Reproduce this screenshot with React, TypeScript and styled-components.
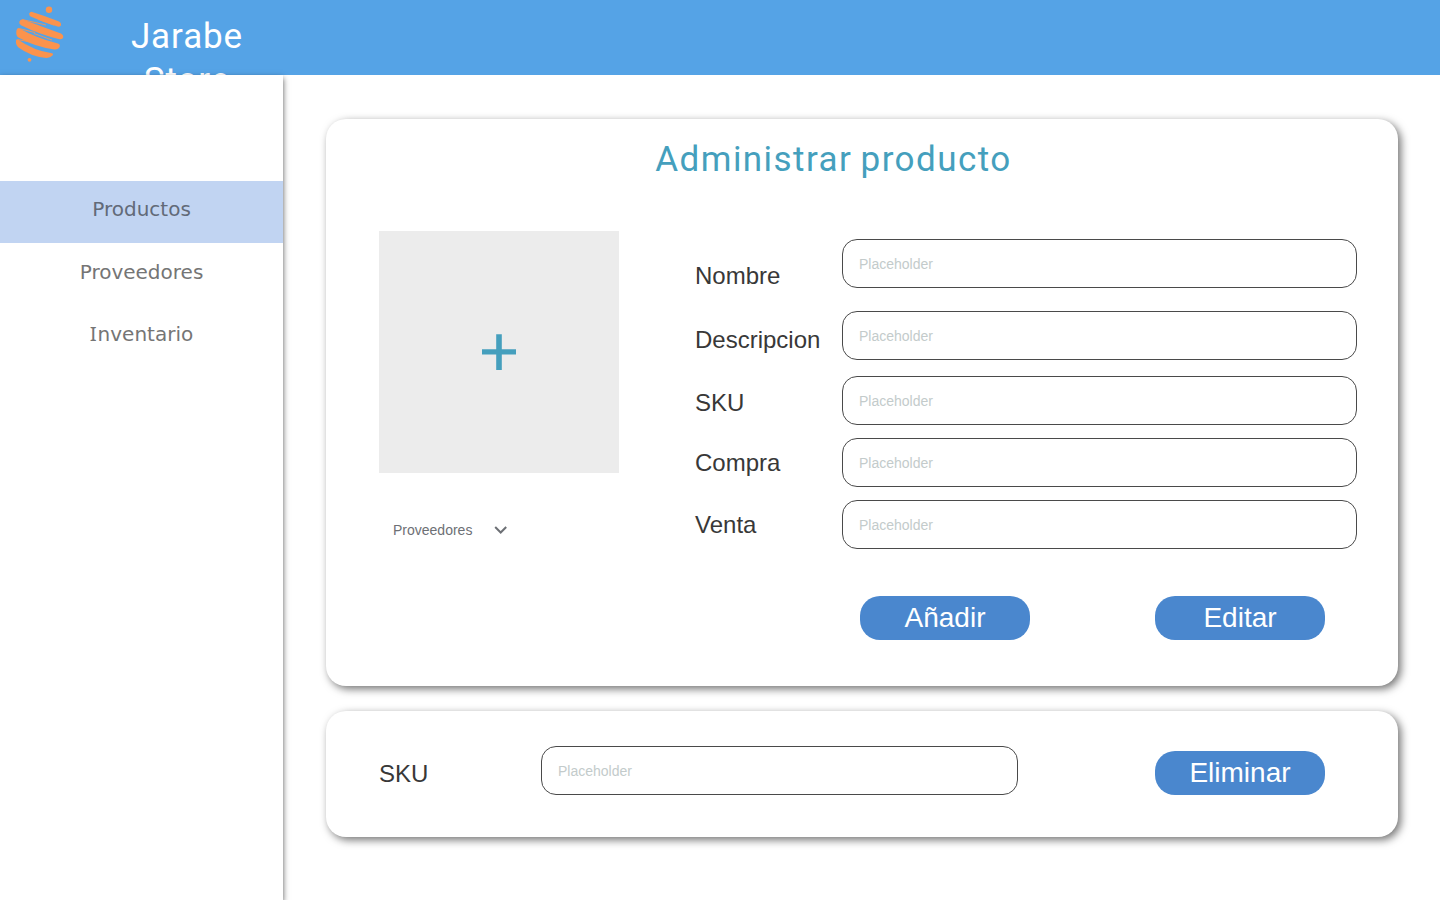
import React from "react";
import styled, { createGlobalStyle } from "styled-components";

const Global = createGlobalStyle`
  * { box-sizing: border-box; }
  body { margin: 0; background: #fff; font-family: "Liberation Sans", Arial, sans-serif; overflow: hidden; }
`;

const Page = styled.div`
  height: 900px;
  display: flex;
  flex-direction: column;
`;

const Header = styled.header`
  flex: none;
  height: 75px;
  display: flex;
  align-items: flex-start;
  background: #55a3e6;
`;

const Logo = styled.svg`
  flex: none;
  width: 90px;
  height: 75px;
`;

const Brand = styled.div`
  width: 160px;
  margin: 15px 0 0 17px;
  text-align: center;
  font: 400 35px/44px Roboto, sans-serif;
  letter-spacing: 0.9px;
  color: #fff;
`;

const Body = styled.div`
  flex: 1;
  display: flex;
  min-height: 0;
`;

const Sidebar = styled.nav`
  position: relative;
  width: 283px;
  padding-top: 106px;
  background: #fff;
  box-shadow: 0 3px 6px rgba(0, 0, 0, 0.65);
`;

const MenuItem = styled.a<{ $active?: boolean; $serifInitial?: boolean }>`
  display: block;
  height: 62px;
  margin-bottom: 0.5px;
  padding-top: 14px;
  text-align: center;
  font: 400 20px/28px Verdana, "DejaVu Sans", sans-serif;
  color: ${(p) => (p.$active ? "#626a78" : "#757575")};
  background: ${(p) => (p.$active ? "#c1d4f2" : "transparent")};
  &::first-letter {
    ${(p) => p.$serifInitial && 'font-family: "Noto Sans", sans-serif; font-size: 20.5px; letter-spacing: 0.8px; line-height: 20px;'}
  }
`;

const Main = styled.main`
  flex: 1;
  padding: 44px 42px 0 43px;
  display: flex;
  flex-direction: column;
  gap: 25px;
`;

const Card = styled.section<{ $height: number }>`
  height: ${(p) => p.$height}px;
  border-radius: 20px;
  background: #fff;
  box-shadow: 3px 3px 8px rgba(0, 0, 0, 0.55);
`;

const Title = styled.h1`
  margin: 0;
  padding: 19px 57px 0 0;
  height: 112px;
  text-align: center;
  font: 400 35px/44px Roboto, sans-serif;
  letter-spacing: 1.45px;
  word-spacing: -2px;
  color: #459fbd;
`;

const Columns = styled.div`
  display: flex;
  padding-left: 53px;
`;

const MediaColumn = styled.div`
  width: 316px;
`;

const ImageDrop = styled.div`
  width: 240px;
  height: 242px;
  background: #ececec;
  display: flex;
  svg { display: block; margin: 103px 0 0 103px; }
`;

const Dropdown = styled.div`
  display: flex;
  align-items: center;
  gap: 22px;
  padding: 47px 0 0 14px;
  font-size: 14px;
  line-height: 20px;
  color: #6d7075;
`;

const Fields = styled.div`
  padding-top: 8px;
`;

const Row = styled.div<{ $gap: number }>`
  display: flex;
  height: 49px;
  margin-bottom: ${(p) => p.$gap}px;
`;

const Label = styled.label<{ $width: number; $top: number }>`
  width: ${(p) => p.$width}px;
  padding-top: ${(p) => p.$top}px;
  font-size: 24px;
  line-height: 28px;
  white-space: nowrap;
  color: #383838;
`;

const Input = styled.input<{ $width: number }>`
  width: ${(p) => p.$width}px;
  height: 49px;
  padding: 0 16px;
  border: 1px solid #4a4a4a;
  border-radius: 15px;
  background: #fff;
  font: 14px "Liberation Sans", Arial, sans-serif;
  &::placeholder { color: #c3cbcb; opacity: 1; }
`;

const Actions = styled.div`
  display: flex;
  gap: 125px;
  padding: 34px 0 0 165px;
`;

const Button = styled.button`
  width: 170px;
  height: 44px;
  padding: 0;
  border: 0;
  border-radius: 20px;
  background: #4a87ce;
  color: #fff;
  font: 28px/44px "Liberation Sans", Arial, sans-serif;
`;

const DeleteRow = styled.div`
  display: flex;
  align-items: flex-start;
  padding: 35px 0 0 53px;
  ${Button} { margin: 5px 0 0 137px; }
`;

const fields = [
  { name: "Nombre", top: 23, gap: 23 },
  { name: "Descripcion", top: 15, gap: 16 },
  { name: "SKU", top: 13, gap: 13 },
  { name: "Compra", top: 11, gap: 13 },
  { name: "Venta", top: 11, gap: 13 },
];

export default function App() {
  return (
    <Page>
      <Global />
      <Header>
        <Logo viewBox="0 0 90 75" fill="#fb934d">
          <circle cx="49" cy="9.8" r="3.2" />
          <circle cx="29.5" cy="59.8" r="1.9" />
          <path d="M31.5 11.8Q45 16 59 21.4Q61.6 22.8 60.9 25.2Q60 27.2 57.5 26.6Q43 22.3 30.6 16.6Q28.8 15.3 29.3 13.4Q30 11.8 31.5 11.8Z" />
          <path d="M22.5 19.2Q43 27 61 33.5Q63.8 35 63.3 37.3Q62.5 39.8 59.5 39.2Q39 34.2 21 25.2Q19 24 19.3 21.8Q20.2 19.2 22.5 19.2Z" />
          <path d="M18.8 28Q36 38 57 43.2Q60.5 44 59.8 46.5Q58.6 49.7 54.5 49.5Q35 47 18 37.3Q16 35.8 16.3 31.5Q16.7 28.2 18.8 28Z" />
          <path d="M17.5 39.2Q34 50.8 52 53.2Q53.8 53.8 52.4 55.6Q50.5 58 46.5 58Q31 56.7 18.2 47.2Q15.5 44.8 16 40.6Q16.5 39 17.5 39.2Z" />
          <path d="M38 19L54 25.2M22.5 19.6L46 25M19.5 28.6L35 32.6M34 33.5L52 40M18 39.7L34 42.6M38 44L58 44.6" fill="none" stroke="#fb934d" strokeWidth="0.9" />
        </Logo>
        <Brand>Jarabe Store</Brand>
      </Header>
      <Body>
        <Sidebar>
          <MenuItem $active>Productos</MenuItem>
          <MenuItem>Proveedores</MenuItem>
          <MenuItem $serifInitial>Inventario</MenuItem>
        </Sidebar>
        <Main>
          <Card $height={567}>
            <Title>Administrar producto</Title>
            <Columns>
              <MediaColumn>
                <ImageDrop>
                  <svg width="34" height="36" viewBox="0 0 34 36" fill="#459fbd">
                    <path d="M14.2 0.3h5.6v14.9H34v5.4H19.8V36h-5.6V20.6H0v-5.4h14.2z" />
                  </svg>
                </ImageDrop>
                <Dropdown>
                  Proveedores
                  <svg width="13" height="8" viewBox="0 0 13 8" fill="none" stroke="#6d7075" strokeWidth="2">
                    <path d="M1.2 1l5.5 5.5L12.2 1" />
                  </svg>
                </Dropdown>
              </MediaColumn>
              <Fields>
                {fields.map((f) => (
                  <Row key={f.name} $gap={f.gap}>
                    <Label $width={147} $top={f.top}>{f.name}</Label>
                    <Input $width={515} placeholder="Placeholder" />
                  </Row>
                ))}
                <Actions>
                  <Button>Añadir</Button>
                  <Button>Editar</Button>
                </Actions>
              </Fields>
            </Columns>
          </Card>
          <Card $height={126}>
            <DeleteRow>
              <Label $width={162} $top={14}>SKU</Label>
              <Input $width={477} placeholder="Placeholder" />
              <Button>Eliminar</Button>
            </DeleteRow>
          </Card>
        </Main>
      </Body>
    </Page>
  );
}
